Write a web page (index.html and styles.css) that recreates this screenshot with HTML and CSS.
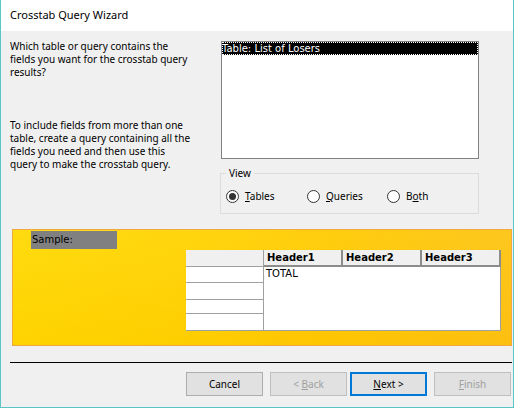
FILE: index.html
```html
<!DOCTYPE html>
<html>
<head>
<meta charset="utf-8">
<link rel="stylesheet" href="styles.css">
</head>
<body>
<div class="window">
  <div class="titlebar">Crosstab Query Wizard</div>
  <div class="top">
    <div class="intro">
      <p>Which table or query contains the<br>fields you want for the crosstab query<br>results?</p>
      <p>To include fields from more than one<br>table, create a query containing all the<br>fields you need and then use this<br>query to make the crosstab query.</p>
    </div>
    <div class="side">
      <div class="listbox">
        <div class="item selected">Table: List of Losers</div>
      </div>
      <fieldset class="view">
        <legend>View</legend>
        <div class="radios">
          <div class="radio"><span class="circle on"></span><span><u>T</u>ables</span></div>
          <div class="radio"><span class="circle"></span><span><u>Q</u>ueries</span></div>
          <div class="radio"><span class="circle"></span><span>B<u>o</u>th</span></div>
        </div>
      </fieldset>
    </div>
  </div>
  <div class="sample">
    <div class="sample-label">Sample:</div>
    <div class="grid">
      <div class="hcorner"></div>
      <div class="hcell">Header1</div>
      <div class="hcell">Header2</div>
      <div class="hcell">Header3</div>
      <div class="rcell"></div>
      <div class="rcell"></div>
      <div class="rcell"></div>
      <div class="rcell"></div>
      <div class="data">TOTAL</div>
    </div>
  </div>
  <div class="sep"></div>
  <div class="buttons">
    <button class="btn"><span>Cancel</span></button>
    <button class="btn disabled"><span>&lt; <u>B</u>ack</span></button>
    <button class="btn default"><span><u>N</u>ext &gt;</span></button>
    <button class="btn disabled"><span><u>F</u>inish</span></button>
  </div>
</div>
</body>
</html>
```
FILE: styles.css
```css
* { box-sizing: border-box; }
html, body { margin: 0; padding: 0; }
body { width: 514px; height: 408px; overflow: hidden; background: #f0f0f0; }

.window {
  width: 514px;
  height: 408px;
  border: 1px solid #5cc5c6;
  border-top: 0;
  background: #f0f0f0;
  display: flex;
  flex-direction: column;
  font-family: "Noto Sans", sans-serif;
  font-size: 10px;
  color: #000;
}

.titlebar {
  flex: none;
  height: 31px;
  background: #fff;
  padding-left: 9px;
  font-size: 11px;
  line-height: 30px;
}

.top { display: flex; padding-left: 9px; flex: none; }
.intro { width: 210px; padding-top: 9px; line-height: 13px; }
.intro p { margin: 0; }
.intro p + p { margin-top: 40px; }

.side { width: 259px; padding-top: 10px; }
.listbox {
  margin-left: 1px;
  width: 258px;
  height: 118px;
  border: 1px solid #828282;
  background: #fff;
}
.item {
  height: 13px;
  line-height: 13px;
  font-family: "DejaVu Sans", sans-serif;
  font-size: 10px;
  white-space: nowrap;
}
.item.selected {
  background: #000;
  color: #fff;
  outline: 1px dotted #fff;
  outline-offset: -1px;
}

.view {
  margin: 8px 0 0 0;
  padding: 10px 4px 10px 5px;
  border: 1px solid #dcdcdc;
  width: 259px;
  min-width: 0;
}
.view legend { padding: 0 3px; line-height: 13px; font-size: 10px; }
.radios { display: grid; grid-template-columns: 81px 80px auto; height: 13px; }
.radio { display: flex; align-items: center; gap: 6px; line-height: 13px; }
.circle {
  width: 13px;
  height: 13px;
  border: 1px solid #333;
  border-radius: 50%;
  background: #fff;
  display: flex;
  align-items: center;
  justify-content: center;
  flex: none;
}
.circle.on::after {
  content: "";
  width: 7px;
  height: 7px;
  border-radius: 50%;
  background: #333;
}

.sample {
  flex: none;
  margin: 15px 0 0 11px;
  width: 500px;
  height: 117px;
  border: 1px solid #f0a840;
  background:
    linear-gradient(to bottom, rgba(255,255,255,0.06), rgba(235,140,0,0.07)),
    linear-gradient(100deg, #ffd900 0%, #ffd300 35%, #ffca00 62%, #fdc312 100%);
}
.sample-label {
  margin: 1px 0 0 18px;
  width: 86px;
  height: 18px;
  background: #808080;
  font-family: "DejaVu Sans", sans-serif;
  font-size: 10px;
  line-height: 17px;
  padding-left: 1px;
}
.grid {
  margin: 1px 0 0 173px;
  width: 315px;
  display: grid;
  grid-template-columns: 78px 79px 79px 79px;
  grid-template-rows: 17px 16px 17px 14px 17px;
}
.hcorner {
  background: #f0f0f0;
  border-right: 1px solid #a0a0a0;
  border-bottom: 1px solid #a0a0a0;
}
.hcell {
  background: #f0f0f0;
  border-right: 2px solid #8c8c8c;
  border-bottom: 2px solid #8c8c8c;
  font-family: "DejaVu Sans", sans-serif;
  font-weight: bold;
  font-size: 10px;
  line-height: 15px;
  padding-left: 3px;
}
.rcell {
  grid-column: 1;
  background: #fff;
  border-right: 1px solid #a0a0a0;
  border-bottom: 1px solid #a0a0a0;
}
.data {
  grid-column: 2 / 5;
  grid-row: 2 / 6;
  background: #fff;
  border-right: 1px solid #a0a0a0;
  border-bottom: 1px solid #a0a0a0;
  font-family: "DejaVu Sans", sans-serif;
  font-size: 10px;
  line-height: 13px;
  padding-left: 2px;
}

.sep { flex: none; margin: 16px 1px 0 9px; height: 1px; background: #000; }

.buttons { display: flex; margin-top: 9px; padding-left: 185px; }
.btn {
  width: 77px;
  height: 24px;
  border: 1px solid #adadad;
  background: #e1e1e1;
  font-family: "Noto Sans", sans-serif;
  font-size: 10px;
  color: #000;
  padding: 0;
  display: flex;
  align-items: center;
  justify-content: center;
  white-space: pre;
}
.btn + .btn { margin-left: 7px; }
.btn.default { border: 2px solid #0078d7; margin-left: 3px; }
.btn.disabled { color: #a0a0a0; border-color: #bfbfbf; }
```
